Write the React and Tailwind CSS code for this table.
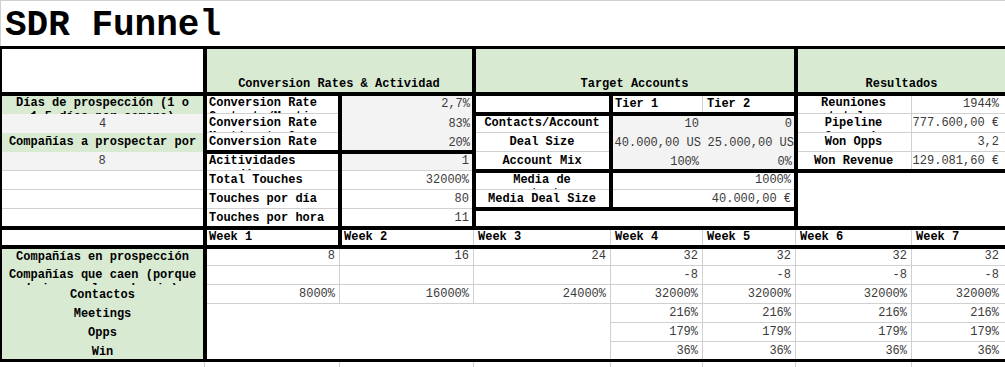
const L = "items-center whitespace-nowrap font-bold text-black";
const LC = "items-center justify-center whitespace-nowrap font-bold text-black";
const V = "items-center justify-end whitespace-nowrap text-[#3a3a3a]";
const VC = "items-center justify-center whitespace-nowrap text-[#3a3a3a]";
const W = "items-start pt-[2px] leading-[14px] font-bold text-black whitespace-nowrap";
const WC = "items-start justify-center text-center pt-[2px] leading-[14px] font-bold text-black whitespace-nowrap";
const GREEN = "bg-[#d9ead3]";
const GRAY = "bg-[#f3f3f3]";
const BOX = "pointer-events-none -m-px border-[3px] border-black";
const HPAD = "pl-[4px] pr-[8px]";

function Cell({ at, bare, pad = "px-[4px]", className = "", children }) {
  return (
    <div
      className={`${at} flex overflow-hidden ${pad} text-[12px] leading-[14px] ${
        bare ? "" : "border-r border-b border-[#d0d0d0]"
      } ${className}`}
    >
      {children}
    </div>
  );
}

function Two({ a, b }) {
  return (
    <div>
      {a}
      <br />
      {b}
    </div>
  );
}

function Box({ at }) {
  return <div className={`${at} ${BOX}`} />;
}

const rowsBottom = [
  { at: "row-start-14", v: "216%" },
  { at: "row-start-15", v: "179%" },
  { at: "row-start-16", v: "36%" },
];

export default function App() {
  return (
    <div className="w-screen h-screen overflow-hidden bg-white font-['Liberation_Mono',monospace]">
      <div className="grid w-[1008px] grid-cols-[205px_135px_134px_137px_92px_93px_116px_96px] grid-rows-[47px_47px_20px_repeat(13,19px)_30px]">
        {/* title */}
        <div className="col-start-1 col-span-8 row-start-1 flex items-center border-t border-l border-[#d0d0d0] pl-[4px] pt-[4px] text-[36px] leading-[36px] font-bold text-black">
          SDR Funnel
        </div>

        {/* headers */}
        <Cell at="col-start-1 row-start-2" />
        <Cell at="col-start-2 col-span-2 row-start-2" className={`${GREEN} items-end justify-center pb-[2px] font-bold whitespace-nowrap`}>
          Conversion Rates &amp; Actividad
        </Cell>
        <Cell at="col-start-4 col-span-3 row-start-2" className={`${GREEN} items-end justify-center pb-[2px] font-bold whitespace-nowrap`}>
          Target Accounts
        </Cell>
        <Cell at="col-start-7 col-span-2 row-start-2" className={`${GREEN} items-end justify-center pb-[2px] font-bold whitespace-nowrap`}>
          Resultados
        </Cell>

        {/* row 1 */}
        <Cell at="col-start-1 row-start-3" bare className={`${WC} ${GREEN}`}>
          <Two a="Días de prospección (1 o" b="1,5 días por semana)" />
        </Cell>
        <Cell at="col-start-2 row-start-3" className={W}>
          <Two a="Conversion Rate" b="Contacts/Meeting" />
        </Cell>
        <Cell at="col-start-3 row-start-3" bare className={`${V} ${GRAY}`}>2,7%</Cell>
        <Cell at="col-start-4 row-start-3" />
        <Cell at="col-start-5 row-start-3" className={L}>Tier 1</Cell>
        <Cell at="col-start-6 row-start-3" className={L}>Tier 2</Cell>
        <Cell at="col-start-7 row-start-3" className={WC}>
          <Two a="Reuniones" b="totales" />
        </Cell>
        <Cell at="col-start-8 row-start-3" pad={HPAD} className={V}>1944%</Cell>

        {/* row 2 */}
        <Cell at="col-start-1 row-start-4" bare className={`${VC} ${GRAY}`}>4</Cell>
        <Cell at="col-start-2 row-start-4" className={W}>
          <Two a="Conversion Rate" b="Meeting to Opp" />
        </Cell>
        <Cell at="col-start-3 row-start-4" bare className={`${V} ${GRAY}`}>83%</Cell>
        <Cell at="col-start-4 row-start-4" className={LC}>Contacts/Account</Cell>
        <Cell at="col-start-5 row-start-4" bare className={`${V} ${GRAY}`}>10</Cell>
        <Cell at="col-start-6 row-start-4" bare className={`${V} ${GRAY}`}>0</Cell>
        <Cell at="col-start-7 row-start-4" className={WC}>
          <Two a="Pipeline" b="Generado" />
        </Cell>
        <Cell at="col-start-8 row-start-4" pad={HPAD} className={V}>777.600,00 €</Cell>

        {/* row 3 */}
        <Cell at="col-start-1 row-start-5" bare className={`${WC} ${GREEN}`}>
          <Two a="Compañías a prospectar por" b="semana" />
        </Cell>
        <Cell at="col-start-2 row-start-5" className={W}>
          <Two a="Conversion Rate" b="Opp to Win" />
        </Cell>
        <Cell at="col-start-3 row-start-5" bare className={`${V} ${GRAY}`}>20%</Cell>
        <Cell at="col-start-4 row-start-5" className={LC}>Deal Size</Cell>
        <Cell at="col-start-5 row-start-5" bare pad="px-[2px]" className={`${V} ${GRAY}`}>40.000,00 US</Cell>
        <Cell at="col-start-6 row-start-5" bare pad="px-[2px]" className={`${V} ${GRAY}`}>25.000,00 US</Cell>
        <Cell at="col-start-7 row-start-5" className={LC}>Won Opps</Cell>
        <Cell at="col-start-8 row-start-5" pad={HPAD} className={V}>3,2</Cell>

        {/* row 4 */}
        <Cell at="col-start-1 row-start-6" className={`${VC} ${GRAY}`}>8</Cell>
        <Cell at="col-start-2 row-start-6" className={W}>
          <Two a="Acitividades" b="por día" />
        </Cell>
        <Cell at="col-start-3 row-start-6" className={`${V} ${GRAY}`}>1</Cell>
        <Cell at="col-start-4 row-start-6" className={LC}>Account Mix</Cell>
        <Cell at="col-start-5 row-start-6" bare className={`${V} ${GRAY}`}>100%</Cell>
        <Cell at="col-start-6 row-start-6" bare className={`${V} ${GRAY}`}>0%</Cell>
        <Cell at="col-start-7 row-start-6" className={LC}>Won Revenue</Cell>
        <Cell at="col-start-8 row-start-6" pad={HPAD} className={V}>129.081,60 €</Cell>

        {/* row 5 */}
        <Cell at="col-start-1 row-start-7" />
        <Cell at="col-start-2 row-start-7" className={L}>Total Touches</Cell>
        <Cell at="col-start-3 row-start-7" className={V}>32000%</Cell>
        <Cell at="col-start-4 row-start-7" className={WC}>
          <Two a="Media de" b="contactos" />
        </Cell>
        <Cell at="col-start-5 col-span-2 row-start-7" className={V}>1000%</Cell>

        {/* row 6 */}
        <Cell at="col-start-1 row-start-8" />
        <Cell at="col-start-2 row-start-8" className={L}>Touches por día</Cell>
        <Cell at="col-start-3 row-start-8" className={V}>80</Cell>
        <Cell at="col-start-4 row-start-8" className={LC}>Media Deal Size</Cell>
        <Cell at="col-start-5 col-span-2 row-start-8" className={V}>40.000,00 €</Cell>

        {/* row 7 */}
        <Cell at="col-start-1 row-start-9" />
        <Cell at="col-start-2 row-start-9" className={L}>Touches por hora</Cell>
        <Cell at="col-start-3 row-start-9" className={V}>11</Cell>

        {/* weeks */}
        <Cell at="col-start-1 row-start-10" />
        <Cell at="col-start-2 row-start-10" className={L}>Week 1</Cell>
        <Cell at="col-start-3 row-start-10" className={L}>Week 2</Cell>
        <Cell at="col-start-4 row-start-10" className={L}>Week 3</Cell>
        <Cell at="col-start-5 row-start-10" className={L}>Week 4</Cell>
        <Cell at="col-start-6 row-start-10" className={L}>Week 5</Cell>
        <Cell at="col-start-7 row-start-10" className={L}>Week 6</Cell>
        <Cell at="col-start-8 row-start-10" className={L}>Week 7</Cell>

        {/* funnel labels */}
        <Cell at="col-start-1 row-start-11" bare className={`${LC} ${GREEN}`}>Compañías en prospección</Cell>
        <Cell at="col-start-1 row-start-12" bare className={`${WC} ${GREEN}`}>
          <Two a="Compañías que caen (porque" b="bajan en la cadencia)" />
        </Cell>
        <Cell at="col-start-1 row-start-13" bare className={`${LC} ${GREEN}`}>Contactos</Cell>
        <Cell at="col-start-1 row-start-14" bare className={`${LC} ${GREEN}`}>Meetings</Cell>
        <Cell at="col-start-1 row-start-15" bare className={`${LC} ${GREEN}`}>Opps</Cell>
        <Cell at="col-start-1 row-start-16" bare className={`${LC} ${GREEN}`}>Win</Cell>

        {/* funnel values */}
        <Cell at="col-start-2 row-start-11" className={V}>8</Cell>
        <Cell at="col-start-3 row-start-11" className={V}>16</Cell>
        <Cell at="col-start-4 row-start-11" className={V}>24</Cell>
        <Cell at="col-start-5 row-start-11" className={V}>32</Cell>
        <Cell at="col-start-6 row-start-11" className={V}>32</Cell>
        <Cell at="col-start-7 row-start-11" className={V}>32</Cell>
        <Cell at="col-start-8 row-start-11" pad={HPAD} className={V}>32</Cell>

        <Cell at="col-start-2 row-start-12" />
        <Cell at="col-start-3 row-start-12" />
        <Cell at="col-start-4 row-start-12" />
        <Cell at="col-start-5 row-start-12" className={V}>-8</Cell>
        <Cell at="col-start-6 row-start-12" className={V}>-8</Cell>
        <Cell at="col-start-7 row-start-12" className={V}>-8</Cell>
        <Cell at="col-start-8 row-start-12" pad={HPAD} className={V}>-8</Cell>

        <Cell at="col-start-2 row-start-13" className={V}>8000%</Cell>
        <Cell at="col-start-3 row-start-13" className={V}>16000%</Cell>
        <Cell at="col-start-4 row-start-13" className={V}>24000%</Cell>
        <Cell at="col-start-5 row-start-13" className={V}>32000%</Cell>
        <Cell at="col-start-6 row-start-13" className={V}>32000%</Cell>
        <Cell at="col-start-7 row-start-13" className={V}>32000%</Cell>
        <Cell at="col-start-8 row-start-13" pad={HPAD} className={V}>32000%</Cell>

        <div className="col-start-2 col-span-3 row-start-14 row-span-3 border-r border-[#d0d0d0]" />
        {rowsBottom.map((r) => (
          <div key={r.at} className="contents">
            <Cell at={`${r.at} col-start-5`} className={V}>{r.v}</Cell>
            <Cell at={`${r.at} col-start-6`} className={V}>{r.v}</Cell>
            <Cell at={`${r.at} col-start-7`} className={V}>{r.v}</Cell>
            <Cell at={`${r.at} col-start-8`} pad={HPAD} className={V}>{r.v}</Cell>
          </div>
        ))}

        {/* trailing row */}
        <div className="col-start-1 row-start-17 border-r border-[#d0d0d0]" />
        <div className="col-start-2 row-start-17 border-r border-[#d0d0d0]" />
        <div className="col-start-3 row-start-17 border-r border-[#d0d0d0]" />
        <div className="col-start-4 row-start-17 border-r border-[#d0d0d0]" />
        <div className="col-start-5 row-start-17 border-r border-[#d0d0d0]" />
        <div className="col-start-6 row-start-17 border-r border-[#d0d0d0]" />
        <div className="col-start-7 row-start-17 border-r border-[#d0d0d0]" />

        {/* thick borders */}
        <Box at="col-start-1 row-start-2" />
        <Box at="col-start-2 col-span-2 row-start-2" />
        <Box at="col-start-4 col-span-3 row-start-2" />
        <Box at="col-start-7 col-span-2 row-start-2" />

        <Box at="col-start-1 row-start-3 row-span-7" />
        <Box at="col-start-2 row-start-3 row-span-3" />
        <Box at="col-start-3 row-start-3 row-span-3" />
        <Box at="col-start-2 row-start-6 row-span-4" />
        <Box at="col-start-3 row-start-6 row-span-4" />

        <Box at="col-start-4 row-start-3" />
        <Box at="col-start-4 row-start-4 row-span-3" />
        <Box at="col-start-4 row-start-7 row-span-2" />
        <Box at="col-start-4 col-span-3 row-start-9" />
        <Box at="col-start-5 col-span-2 row-start-3" />
        <Box at="col-start-5 col-span-2 row-start-4 row-span-3" />
        <Box at="col-start-5 col-span-2 row-start-7 row-span-2" />

        <Box at="col-start-7 col-span-2 row-start-3 row-span-4" />
        <Box at="col-start-7 col-span-2 row-start-7 row-span-3" />

        <Box at="col-start-1 row-start-10" />
        <Box at="col-start-2 row-start-10" />
        <Box at="col-start-3 col-span-6 row-start-10" />

        <Box at="col-start-1 row-start-11 row-span-6" />
        <Box at="col-start-2 col-span-7 row-start-11 row-span-6" />
      </div>
    </div>
  );
}
